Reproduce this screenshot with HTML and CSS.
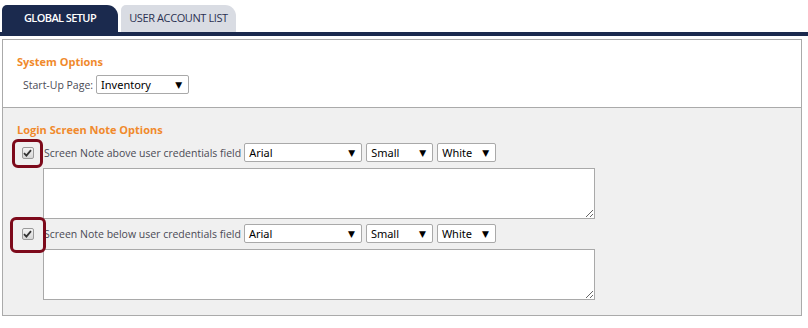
FILE: index.html
```html
<!DOCTYPE html>
<html lang="en">
<head>
    <meta charset="UTF-8">
    <title>Global Setup</title>
    <link rel="stylesheet" href="styles.css">
</head>
<body>
    <div class="tabs">
        <div class="tab active">GLOBAL SETUP</div>
        <div class="tab">USER ACCOUNT LIST</div>
    </div>

    <div class="panel">
        <div class="section top">
            <h3 class="title">System Options</h3>
            <div class="line startup">
                <span class="label">Start-Up Page:</span>
                <span class="sel w-page">Inventory<i>&#9660;</i></span>
            </div>
        </div>

        <div class="section grey">
            <h3 class="title">Login Screen Note Options</h3>

            <div class="note first">
                <div class="line">
                    <span class="mark"><span class="check"><span class="ring"></span><svg width="9" height="8" viewBox="0 0 9 8"><path d="M1 4.2 L3.4 6.6 L8 1.2" fill="none" stroke="#333" stroke-width="1.8"/></svg></span></span>
                    <span class="label">Screen Note above user credentials field</span>
                    <span class="sel w-font">Arial<i>&#9660;</i></span>
                    <span class="sel w-size">Small<i>&#9660;</i></span>
                    <span class="sel w-color">White<i>&#9660;</i></span>
                </div>
                <textarea class="box"></textarea>
            </div>

            <div class="note second">
                <div class="line">
                    <span class="mark"><span class="check"><span class="ring"></span><svg width="9" height="8" viewBox="0 0 9 8"><path d="M1 4.2 L3.4 6.6 L8 1.2" fill="none" stroke="#333" stroke-width="1.8"/></svg></span></span>
                    <span class="label">Screen Note below user credentials field</span>
                    <span class="sel w-font">Arial<i>&#9660;</i></span>
                    <span class="sel w-size">Small<i>&#9660;</i></span>
                    <span class="sel w-color">White<i>&#9660;</i></span>
                </div>
                <textarea class="box"></textarea>
            </div>
        </div>
    </div>
</body>
</html>
```

FILE: styles.css
```css
body{
    margin: 0;
    background-color: white;
    font-family: 'Open Sans', 'DejaVu Sans', sans-serif;
    color: #333;
}
.tabs{
    display: flex;
    gap: 3px;
    padding: 5px 0 0 2px;
    border-bottom: 4px solid #1b2a4e;
}
.tab{
    height: 27px;
    line-height: 26px;
    text-align: center;
    font-size: 11px;
    font-weight: 600;
    letter-spacing: -0.6px;
    border-radius: 5px 11px 0 0;
}
.tab.active{
    width: 116px;
    background-color: #1b2a4e;
    color: white;
}
.tab:not(.active){
    width: 115px;
    background-color: #d9dce3;
    color: #2b3152;
    font-weight: normal;
    letter-spacing: -0.4px;
}
.panel{
    margin: 3px 6px 0 2px;
    border: 1px solid #aaa;
}
.section{
    padding: 0 0 0 14px;
}
.top{
    height: 67px;
    background-color: white;
}
.grey{
    height: 207px;
    border-top: 1px solid #aaa;
    background-color: #f0f0f0;
}
.title{
    margin: 0;
    font-size: 11px;
    line-height: 16px;
    font-weight: bold;
    color: #f08a2c;
}
.top .title{
    padding-top: 14px;
}
.grey .title{
    padding-top: 14px;
}
.line{
    display: flex;
    align-items: center;
    font-size: 10.5px;
}
.startup{
    margin: 5px 0 0 6px;
}
.startup .label{
    margin-right: 3px;
}
.sel{
    position: relative;
    display: inline-block;
    box-sizing: border-box;
    height: 19px;
    line-height: 17px;
    padding-left: 4px;
    background-color: white;
    border: 1px solid #a9a9a9;
    border-radius: 2px;
    font-family: 'Noto Sans', 'DejaVu Sans', sans-serif;
    font-size: 11px;
    color: #000;
    margin-right: 4px;
}
.sel i{
    position: absolute;
    right: 6px;
    top: 0;
    font-style: normal;
    font-size: 9px;
}
.w-page{ width: 93px; }
.w-font{ width: 118px; }
.w-size{ width: 67px; }
.w-color{ width: 59px; }
.note .line{
    height: 23px;
    margin-top: 3px;
}
.mark{
    width: 33px;
    margin-left: -6px;
    display: flex;
    justify-content: center;
}
.check{
    position: relative;
    box-sizing: border-box;
    width: 12px;
    height: 12px;
    border: 1px solid #9a9a9a;
    border-radius: 2px;
    background: linear-gradient(#f4f4f4, #d6d6d6);
    display: flex;
    align-items: center;
    justify-content: center;
}
/* red highlight drawn over the checkbox */
.ring{
    position: absolute;
    box-sizing: border-box;
    border: 3px solid #7d0a1b;
    border-radius: 6px;
}
.first .ring{
    left: -11px;
    top: -9px;
    width: 31px;
    height: 29px;
}
.second .ring{
    left: -13px;
    top: -12px;
    width: 36px;
    height: 36px;
}
.label{
    color: #4a4a55;
    margin-right: 3px;
}
.box{
    display: block;
    box-sizing: border-box;
    width: 552px;
    height: 51px;
    margin: 4px 0 0 26px;
    border: 1px solid #a9a9a9;
    background-color: white;
}
```
